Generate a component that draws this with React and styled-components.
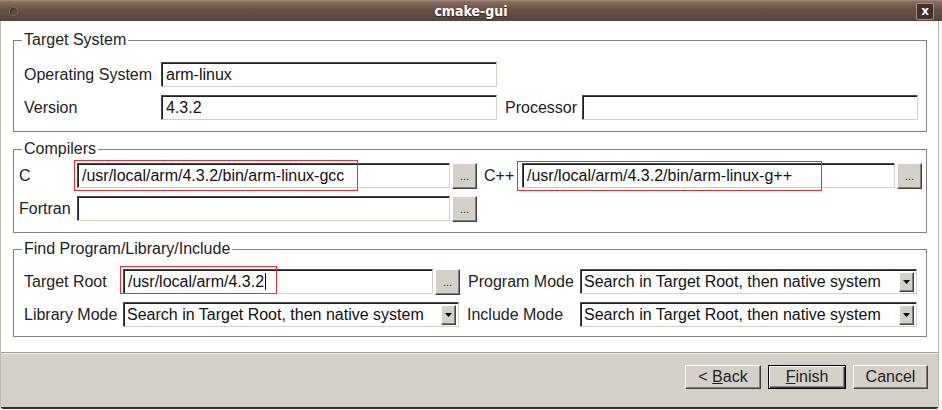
import styled, { createGlobalStyle } from 'styled-components';

const GlobalStyle = createGlobalStyle`
  html, body {
    margin: 0;
    padding: 0;
  }
  body {
    width: 942px;
    height: 410px;
    overflow: hidden;
    background: #f4f3f1;
    font-family: "Liberation Sans", Arial, sans-serif;
    font-size: 16px;
    color: #111;
  }
`;

const Screen = styled.div`
  width: 942px;
  height: 410px;
  display: flex;
  flex-direction: column;
`;

// 창 제목 표시줄: 왼쪽 메뉴 점, 가운데 제목, 오른쪽 닫기 버튼
const TitleBar = styled.header`
  flex: none;
  height: 21px;
  display: grid;
  grid-template-columns: 34px 1fr 34px;
  align-items: center;
  background: linear-gradient(#8a7262 0%, #6a5547 35%, #54433a 100%);
  border-top: 1px solid #9c8576;
  box-sizing: border-box;
`;

const MenuDot = styled.span`
  width: 7px;
  height: 7px;
  margin-left: 10px;
  border-radius: 50%;
  background: #5c4a40;
  box-shadow: inset 1px 1px 1px #3a2d26, 0 0 0 1px #7c6658;
`;

const Title = styled.h1`
  margin: 0;
  text-align: center;
  color: #fff;
  font-family: "DejaVu Sans Condensed", "DejaVu Sans", sans-serif;
  font-size: 14px;
  font-weight: 700;
  line-height: 20px;
  text-shadow: 0 1px 1px #2e231d;
`;

const CloseButton = styled.span`
  justify-self: end;
  margin-right: 8px;
  width: 16px;
  height: 15px;
  display: flex;
  align-items: center;
  justify-content: center;
  border: 1px solid #a89284;
  border-radius: 2px;
  background: #3f322b;
  color: #fff;
  font-family: "DejaVu Sans", sans-serif;
  font-weight: 700;
  font-size: 12px;
  line-height: 1;
`;

const Body = styled.div`
  flex: 1;
  display: flex;
`;

const Frame = styled.div`
  width: 939px;
  box-sizing: border-box;
  display: flex;
  flex-direction: column;
  border-left: 1px solid #bdb9b1;
  border-right: 1px solid #bdb9b1;
  border-bottom: 2px solid #2e2e2e;
  border-bottom-left-radius: 4px;
  border-bottom-right-radius: 4px;
  height: 388px;
`;

const Content = styled.main`
  flex: none;
  height: 331px;
  box-sizing: border-box;
  padding: 10px 11px 0 12px;
  background: #fff;
`;

// 그룹 박스(fieldset)와 그 제목
const Group = styled.fieldset`
  margin: 0 0 ${({ $gap }) => $gap}px;
  padding: 0;
  min-width: 0;
  border: 1px solid #808080;
`;

const Legend = styled.legend`
  margin-left: 8px;
  padding: 0 2px;
  line-height: 18px;
  color: #222;
`;

const GroupBody = styled.div`
  display: flex;
  flex-direction: column;
  gap: ${({ $rowGap }) => $rowGap}px;
  padding: ${({ $pad }) => $pad};
`;

const Row = styled.div`
  display: flex;
  align-items: flex-start;
  height: ${({ $h }) => $h || 25}px;
  line-height: 25px;
`;

const Label = styled.span`
  flex: none;
  width: ${({ $w }) => $w}px;
  margin-left: ${({ $ml }) => $ml || 0}px;
  white-space: nowrap;
  color: #222;
`;

const FieldWrap = styled.div`
  position: relative;
  flex: ${({ $grow }) => ($grow ? '1' : 'none')};
  width: ${({ $w }) => ($w ? `${$w}px` : 'auto')};
  height: 25px;
`;

const Field = styled.div`
  height: 25px;
  box-sizing: border-box;
  display: flex;
  align-items: center;
  padding-left: 4px;
  background: #fff;
  border: 1px solid;
  border-color: #4a4a4a #d4d0c8 #d4d0c8 #4a4a4a;
  box-shadow: inset 1px 1px 0 #1e1e1e;
  white-space: nowrap;
  overflow: hidden;
  color: #111;
`;

const Caret = styled.span`
  display: inline-block;
  width: 1px;
  height: 17px;
  margin-left: 1px;
  background: #000;
`;

// 스크린샷 위에 그려진 빨간 강조 상자
const Highlight = styled.span`
  position: absolute;
  z-index: 2;
  display: block;
  box-sizing: border-box;
  left: ${({ $l }) => $l}px;
  top: ${({ $t }) => $t}px;
  width: ${({ $w }) => $w}px;
  height: ${({ $h }) => $h}px;
  border: 1px solid #d8383c;
  pointer-events: none;
`;

const Browse = styled.span`
  flex: none;
  width: 25px;
  height: 26px;
  margin-left: 2px;
  box-sizing: border-box;
  display: flex;
  align-items: flex-end;
  justify-content: center;
  padding-bottom: 6px;
  background: #d4d0c8;
  border: 1px solid;
  border-color: #fff #404040 #404040 #fff;
  box-shadow: inset -1px -1px 0 #808080;
  font-size: 11px;
  line-height: 1;
  color: #222;
`;

const Combo = styled.div`
  position: relative;
  flex: ${({ $grow }) => ($grow ? '1' : 'none')};
  width: ${({ $w }) => ($w ? `${$w}px` : 'auto')};
  height: 25px;
  box-sizing: border-box;
  display: flex;
  align-items: center;
  padding: 0 2px 0 3px;
  background: #fff;
  border: 1px solid;
  border-color: #4a4a4a #d4d0c8 #d4d0c8 #4a4a4a;
  box-shadow: inset 1px 1px 0 #1e1e1e;
  white-space: nowrap;
`;

const ComboText = styled.span`
  flex: 1;
  overflow: hidden;
  color: #111;
`;

const ComboArrow = styled.span`
  flex: none;
  width: 15px;
  height: 20px;
  box-sizing: border-box;
  display: flex;
  align-items: center;
  justify-content: center;
  background: #d4d0c8;
  border: 1px solid;
  border-color: #fff #404040 #404040 #fff;
  box-shadow: inset -1px -1px 0 #808080;
`;

const ButtonBar = styled.footer`
  flex: 1;
  display: flex;
  justify-content: flex-end;
  align-items: flex-start;
  gap: 7px;
  padding: 12px 10px 0 0;
  background: #d4d0c8;
  border-top: 1px solid #a09c94;
  box-shadow: inset 0 1px 0 #ecebe8;
`;

const DialogButton = styled.span`
  width: ${({ $w }) => $w}px;
  height: 24px;
  box-sizing: border-box;
  display: flex;
  align-items: center;
  justify-content: center;
  background: #d4d0c8;
  border: 1px solid;
  border-color: ${({ $default }) =>
    $default ? '#000' : '#fff #404040 #404040 #fff'};
  box-shadow: ${({ $default }) =>
    $default
      ? 'inset 1px 1px 0 #fff, inset -1px -1px 0 #404040, inset -2px -2px 0 #808080'
      : 'inset -1px -1px 0 #808080'};
  color: #222;
  white-space: nowrap;
`;

const Edge = styled.div`
  flex: 1;
  background: #fafafa;
`;

const Arrow = () => (
  <svg width="7" height="4" viewBox="0 0 7 4">
    <path d="M0 0h7L3.5 4z" fill="#000" />
  </svg>
);

const SEARCH = 'Search in Target Root, then native system';

const App = () => {
  return (
    <Screen>
      <GlobalStyle />
      <TitleBar>
        <MenuDot />
        <Title>cmake-gui</Title>
        <CloseButton>x</CloseButton>
      </TitleBar>
      <Body>
        <Frame>
          <Content>
            <Group $gap={8}>
              <Legend>Target System</Legend>
              <GroupBody $rowGap={8} $pad="13px 8px 11px 10px">
                <Row>
                  <Label $w={137}>Operating System</Label>
                  <FieldWrap $w={336}>
                    <Field>arm-linux</Field>
                  </FieldWrap>
                </Row>
                <Row>
                  <Label $w={137}>Version</Label>
                  <FieldWrap $w={336}>
                    <Field>4.3.2</Field>
                  </FieldWrap>
                  <Label $w={77} $ml={8}>
                    Processor
                  </Label>
                  <FieldWrap $grow>
                    <Field />
                  </FieldWrap>
                </Row>
              </GroupBody>
            </Group>

            <Group $gap={7}>
              <Legend>Compilers</Legend>
              <GroupBody $rowGap={7} $pad="5px 4px 10px 5px">
                <Row $h={26}>
                  <Label $w={58}>C</Label>
                  <FieldWrap $w={373}>
                    <Field>/usr/local/arm/4.3.2/bin/arm-linux-gcc</Field>
                    <Highlight $l={-3} $t={-3} $w={284} $h={31} />
                  </FieldWrap>
                  <Browse>...</Browse>
                  <Label $w={38} $ml={7}>
                    C++
                  </Label>
                  <FieldWrap $grow>
                    <Field>/usr/local/arm/4.3.2/bin/arm-linux-g++</Field>
                    <Highlight $l={-5} $t={-2} $w={305} $h={30} />
                  </FieldWrap>
                  <Browse>...</Browse>
                </Row>
                <Row $h={26}>
                  <Label $w={58}>Fortran</Label>
                  <FieldWrap $w={373}>
                    <Field />
                  </FieldWrap>
                  <Browse>...</Browse>
                </Row>
              </GroupBody>
            </Group>

            <Group $gap={0}>
              <Legend>Find Program/Library/Include</Legend>
              <GroupBody $rowGap={8} $pad="11px 9px 9px 10px">
                <Row>
                  <Label $w={99}>Target Root</Label>
                  <FieldWrap $w={310}>
                    <Field>
                      /usr/local/arm/4.3.2
                      <Caret />
                    </Field>
                    <Highlight $l={-3} $t={-3} $w={157} $h={28} />
                  </FieldWrap>
                  <Browse>...</Browse>
                  <Label $w={112} $ml={8}>
                    Program Mode
                  </Label>
                  <Combo $grow>
                    <ComboText>{SEARCH}</ComboText>
                    <ComboArrow>
                      <Arrow />
                    </ComboArrow>
                  </Combo>
                </Row>
                <Row>
                  <Label $w={99}>Library Mode</Label>
                  <Combo $w={336}>
                    <ComboText>{SEARCH}</ComboText>
                    <ComboArrow>
                      <Arrow />
                    </ComboArrow>
                  </Combo>
                  <Label $w={113} $ml={8}>
                    Include Mode
                  </Label>
                  <Combo $grow>
                    <ComboText>{SEARCH}</ComboText>
                    <ComboArrow>
                      <Arrow />
                    </ComboArrow>
                  </Combo>
                </Row>
              </GroupBody>
            </Group>
          </Content>
          <ButtonBar>
            <DialogButton $w={76}>
              &lt;&nbsp;<u>B</u>ack
            </DialogButton>
            <DialogButton $w={78} $default>
              <u>F</u>inish
            </DialogButton>
            <DialogButton $w={75}>Cancel</DialogButton>
          </ButtonBar>
        </Frame>
        <Edge />
      </Body>
    </Screen>
  );
};

export default App;
